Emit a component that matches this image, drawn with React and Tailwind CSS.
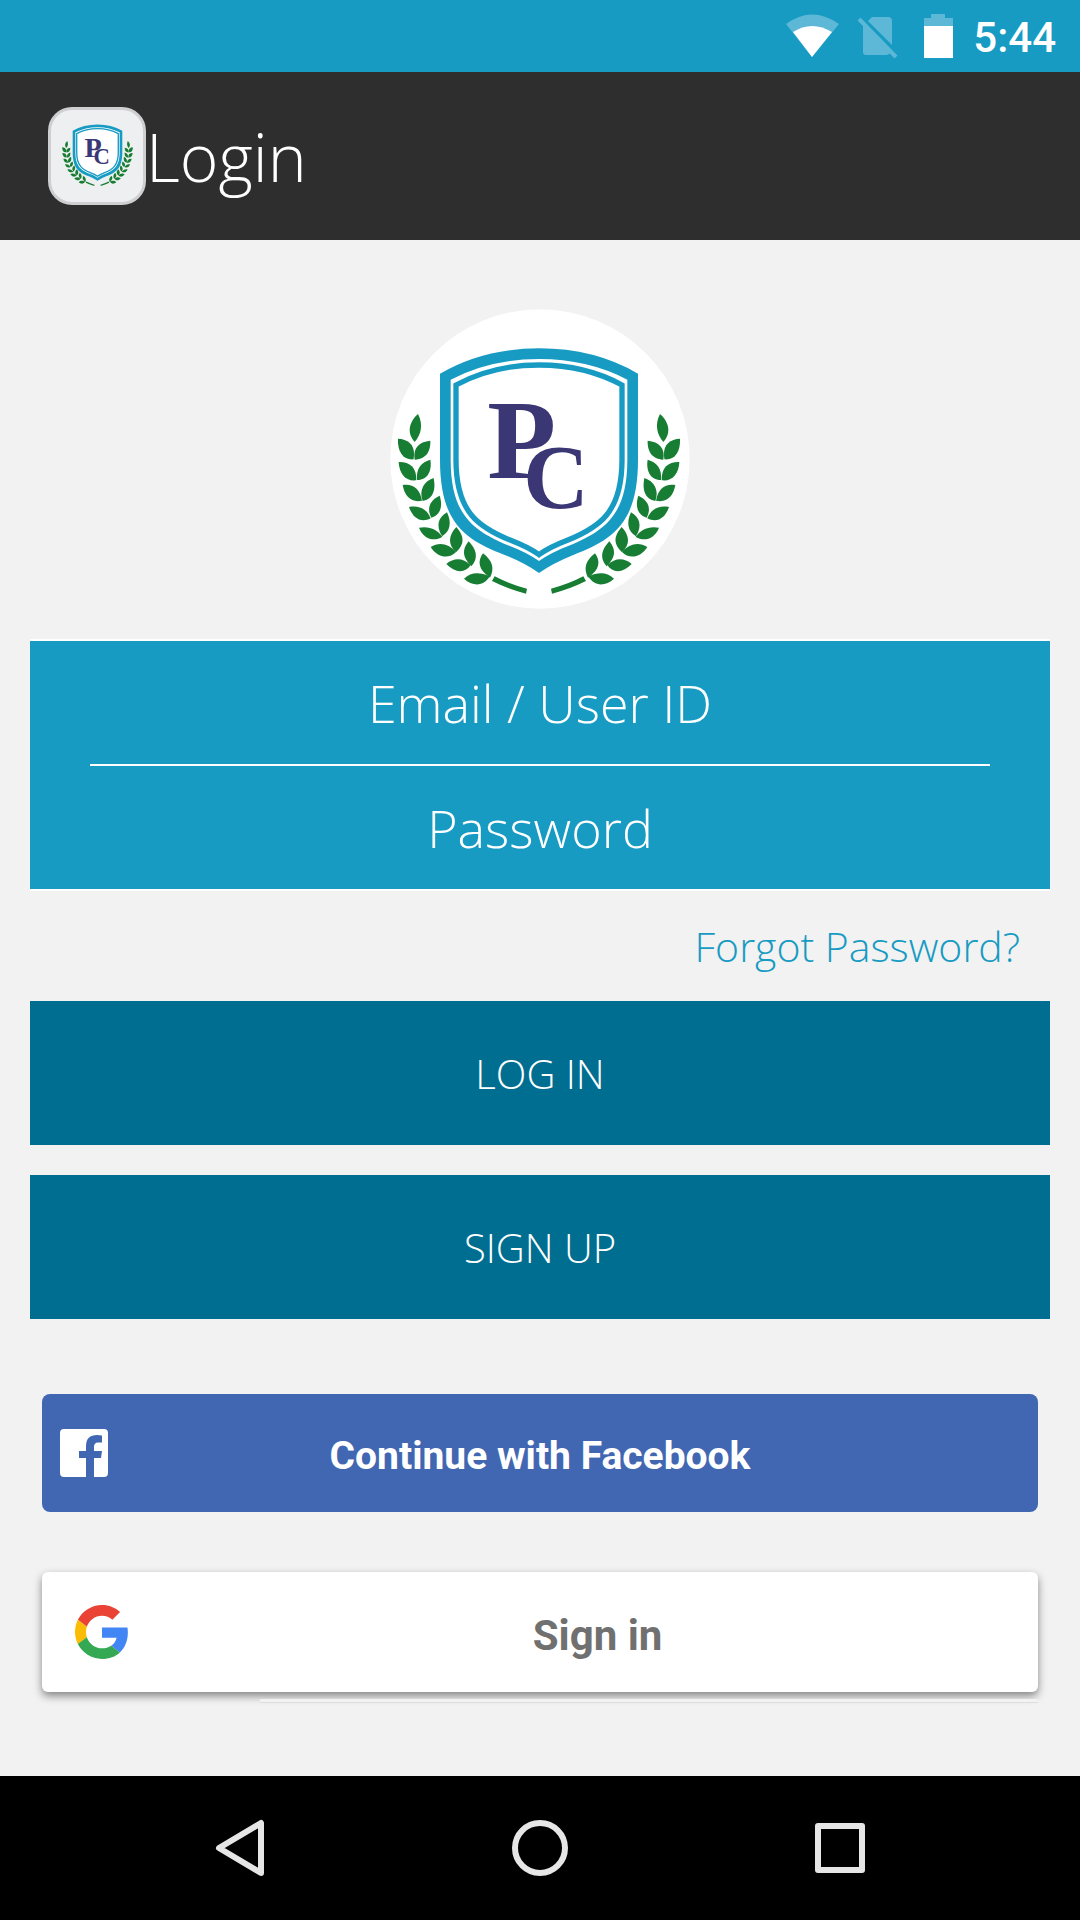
import React, { useState } from 'react';

const LEAVES = [
    // tip leaf, then pairs going down the branch
    'M114 343C92 362 76 396 104 427C124 404 130 374 114 343Z',
    'M54 417C82 418 104 434 102 466L101 479C70 482 52 456 54 417Z',
    'M151 423C152 450 142 478 104 480C98 446 116 426 151 423Z',
    'M56 487C88 486 110 502 109 542C76 546 58 522 56 487Z',
    'M151 480C156 510 146 540 111 541C108 508 122 488 151 480Z',
    'M68 556C98 551 120 566 126 603C94 610 74 590 68 556Z',
    'M161 535C168 570 160 598 128 604C116 572 132 544 161 535Z',
    'M87 622C120 616 142 630 152 656C122 672 98 654 87 622Z',
    'M179 588C190 622 180 646 154 654C138 624 152 600 179 588Z',
    'M117 684C148 678 172 690 187 711C162 728 130 718 117 684Z',
    'M201 638C216 670 210 696 186 710C166 676 176 652 201 638Z',
    'M152 742C178 726 206 732 228 757C206 780 172 774 152 742Z',
    'M229 682C254 710 254 734 228 758C202 734 206 706 229 682Z',
    'M199 793C222 774 248 774 272 796C256 822 224 820 199 793Z',
    'M266 725C290 750 296 776 274 800C246 772 246 750 266 725Z',
    'M252 837C274 816 300 818 329 830C312 862 276 860 252 837Z',
    'M309 761C338 784 344 806 330 834C294 810 292 784 309 761Z',
    'M344 830Q390 854 441 867L438 882Q384 868 336 844Z',
];

function Branch({ transform }) {
    return (
        <g fill="#167d33" transform={transform}>
            {LEAVES.map((d, i) => (
                <path key={i} d={d} />
            ))}
        </g>
    );
}

function Crest({ viewBox, disc, className }) {
    return (
        <svg viewBox={viewBox} className={className} aria-hidden="true">
            {disc && <circle cx="480" cy="478" r="449" fill="#fff" />}
            <path
                d="M180 222Q310 146 477 146Q644 146 774 222V480C774 680 690 722 580 766Q520 790 477 820Q434 790 374 766C264 722 180 680 180 480Z"
                fill="#179bc3"
            />
            <path
                d="M212 240Q330 178 477 178Q624 178 742 240V480C742 650 670 694 570 737Q515 758 477 784Q439 758 384 737C284 694 212 650 212 480Z"
                fill="#fff"
            />
            <path
                d="M228 256Q338 196 477 196Q616 196 726 256V480C726 640 656 684 562 722Q510 742 477 765Q444 742 392 722C298 684 228 640 228 480Z"
                fill="#fff"
                stroke="#179bc3"
                strokeWidth="16"
            />
            <g fill="#3b3775" fontFamily="'Liberation Serif', serif" fontWeight="bold">
                <text x="322" y="535" fontSize="338">P</text>
                <text x="430" y="625" fontSize="272">C</text>
            </g>
            <Branch />
            <Branch transform="translate(954 0) scale(-1 1)" />
        </svg>
    );
}

function StatusBar() {
    return (
        <div className="flex h-18 items-center justify-end gap-3 bg-[#179bc3] pr-6 font-['Roboto',sans-serif] text-white">
            <svg viewBox="120 0 200 72" className="h-18 w-[200px]" aria-hidden="true">
                <path d="M145 24Q171 5 198 24L171 57Z" fill="#5cb8d6" />
                <path d="M152 32Q171 20 191 32L171 57Z" fill="#fff" />
                <path d="M231 17H247Q251 17 251 21V45L227 21ZM222 25L249 53Q248 55 245 55H225Q222 55 222 52Z" fill="#5cb8d6" />
                <path d="M218 19L255 57" stroke="#5cb8d6" strokeWidth="4" />
                <path d="M290 14H304V18H312V26H283V18H290Z" fill="#5cb8d6" />
                <path d="M283 26H312V58H283Z" fill="#fff" />
            </svg>
            <span className="pt-1 text-[42px] font-medium leading-none">5:44</span>
        </div>
    );
}

function Header() {
    return (
        <header className="flex h-42 items-center bg-[#2e2e2e] px-12">
            <div className="flex size-[98px] items-center justify-center rounded-3xl border-3 border-[#cfcfd1] bg-[#eeeff0]">
                <Crest viewBox="40 140 874 766" className="w-[73px]" />
            </div>
            <h1 className="text-[66px] font-[350] text-white">Login</h1>
        </header>
    );
}

function Field({ label, type, value, onChange }) {
    return (
        <input
            type={type}
            aria-label={label}
            placeholder={label}
            value={value}
            onChange={(e) => onChange(e.target.value)}
            className="h-[123px] w-full bg-transparent text-center text-[52px] font-[350] text-white outline-none placeholder:text-white"
        />
    );
}

function GoogleLogo() {
    return (
        <svg viewBox="0 0 48 48" className="size-[54px]" aria-hidden="true">
            <path fill="#EA4335" d="M24 9.5c3.54 0 6.71 1.22 9.21 3.6l6.85-6.85C35.9 2.38 30.47 0 24 0 14.62 0 6.51 5.38 2.56 13.22l7.98 6.19C12.43 13.72 17.74 9.5 24 9.5z" />
            <path fill="#4285F4" d="M46.98 24.55c0-1.57-.15-3.09-.38-4.55H24v9.02h12.94c-.58 2.96-2.26 5.48-4.78 7.18l7.73 6c4.51-4.18 7.09-10.36 7.09-17.65z" />
            <path fill="#FBBC05" d="M10.53 28.59c-.48-1.45-.76-2.99-.76-4.59s.27-3.14.76-4.59l-7.98-6.19C.92 16.46 0 20.12 0 24c0 3.88.92 7.54 2.56 10.78l7.97-6.19z" />
            <path fill="#34A853" d="M24 48c6.48 0 11.93-2.13 15.89-5.81l-7.73-6c-2.15 1.45-4.92 2.3-8.16 2.3-6.26 0-11.57-4.22-13.47-9.91l-7.98 6.19C6.51 42.62 14.62 48 24 48z" />
        </svg>
    );
}

function NavBar() {
    return (
        <nav className="flex h-36 items-center justify-between bg-black px-[204px]">
            <button type="button" aria-label="Back" className="flex w-18 justify-center">
                <svg viewBox="0 0 72 72" className="size-18" fill="none" stroke="#e6e6e6" strokeWidth="6" strokeLinejoin="round">
                    <path d="M15 36L57 11V61Z" />
                </svg>
            </button>
            <button type="button" aria-label="Home" className="flex w-18 justify-center">
                <svg viewBox="0 0 72 72" className="size-18" fill="none" stroke="#e6e6e6" strokeWidth="6">
                    <circle cx="36" cy="36" r="25" />
                </svg>
            </button>
            <button type="button" aria-label="Recent apps" className="flex w-18 justify-center">
                <svg viewBox="0 0 72 72" className="size-18" fill="none" stroke="#e6e6e6" strokeWidth="6" strokeLinejoin="round">
                    <path d="M14 14H58V58H14Z" />
                </svg>
            </button>
        </nav>
    );
}

export default function App() {
    const [user, setUser] = useState('');
    const [password, setPassword] = useState('');

    return (
        <div className="flex min-h-screen flex-col bg-[#f2f2f2] font-['Open_Sans',sans-serif]">
            <StatusBar />
            <Header />

            <main className="flex flex-1 flex-col px-[30px] pt-[69px]">
                <Crest viewBox="30 28 900 900" disc className="size-[300px] self-center" />

                <form onSubmit={(e) => e.preventDefault()} className="mt-[30px] flex flex-col">
                    <div className="border-y-2 border-white bg-[#179bc3] px-[60px]">
                        <Field label="Email / User ID" type="text" value={user} onChange={setUser} />
                        <div className="h-0.5 bg-white" />
                        <Field label="Password" type="password" value={password} onChange={setPassword} />
                    </div>
                    <a href="#forgot" className="mr-[30px] self-end py-7 text-[41px] leading-[54px] font-[350] text-[#179bc3]">
                        Forgot Password?
                    </a>
                    <button type="submit" className="h-36 bg-[#006e90] pt-0.5 text-[40px] font-[350] text-white">
                        LOG IN
                    </button>
                    <button type="button" className="mt-[30px] h-36 bg-[#006e90] pt-0.5 text-[40px] font-[350] text-white">
                        SIGN UP
                    </button>
                </form>

                {/* Social sign-in */}
                <div className="mx-3 mt-[75px] flex flex-col gap-[60px] font-['Roboto',sans-serif]">
                    <button type="button" className="flex h-[118px] items-center rounded-lg bg-[#4267b2] px-[18px] text-white">
                        <svg viewBox="0 0 48 48" className="size-12" aria-hidden="true">
                            <path
                                fill="#fff"
                                d="M4 0H44Q48 0 48 4V44Q48 48 44 48H34V29H41L42 22H34V18Q34 13.500 38 13.500H42V6.500Q26 4 26 17V22H19V29H26V48H4Q0 48 0 44V4Q0 0 4 0Z"
                            />
                        </svg>
                        <span className="flex-1 pt-1.5 pr-12 text-[39px] font-bold">Continue with Facebook</span>
                    </button>
                    <button
                        type="button"
                        className="relative flex h-[120px] items-center rounded-md bg-white pl-[33px] text-[#707070] shadow-[0_4px_8px_rgba(0,0,0,0.45)]"
                    >
                        <GoogleLogo />
                        <span className="flex-1 pt-1.5 pl-7 text-[42px] font-bold">Sign in</span>
                        {/* lower edge of the raised card */}
                        <span className="absolute top-[127px] right-0 left-[218px] h-1 border-b border-[#dedede] bg-[#f2f2f2]" />
                    </button>
                </div>
            </main>

            <NavBar />
        </div>
    );
}
